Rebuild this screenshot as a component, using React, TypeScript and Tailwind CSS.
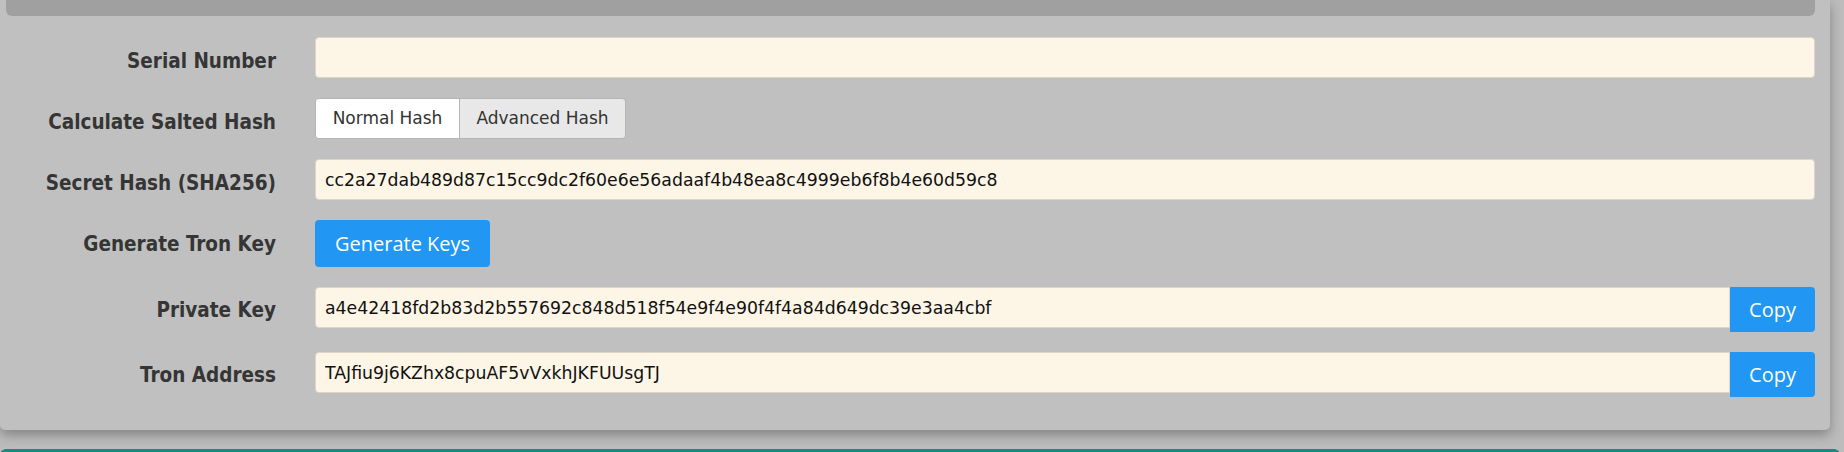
import { useState } from "react";

const LABEL =
  "w-[276px] shrink-0 text-right font-['DejaVu_Sans_Condensed','DejaVu_Sans',sans-serif] font-bold text-[20.5px] text-[#353535]";
const FIELD =
  "h-[41px] w-full rounded-[4px] border border-[#ddd5c6] bg-[#fdf5e6] pl-[9px] font-['DejaVu_Sans',sans-serif] text-[17.3px] text-[#111] outline-none";
const BLUE_BTN =
  "bg-[#2196f3] text-white font-['Open_Sans',sans-serif] text-[20px]";

const SECRET_HASH = "cc2a27dab489d87c15cc9dc2f60e6e56adaaf4b48ea8c4999eb6f8b4e60d59c8";
const PRIVATE_KEY = "a4e42418fd2b83d2b557692c848d518f54e9f4e90f4f4a84d649dc39e3aa4cbf";
const TRON_ADDRESS = "TAJfiu9j6KZhx8cpuAF5vVxkhJKFUUsgTJ";

function Row({ label, low, children }: { label: string; low?: boolean; children: React.ReactNode }) {
  return (
    <div className="flex items-center">
      <label className={`${LABEL} ${low ? "pt-[7px]" : "pt-[2px]"}`}>{label}</label>
      <div className="ml-[39px] flex flex-1">{children}</div>
    </div>
  );
}

function CopyField({ value }: { value: string }) {
  return (
    <div className="flex w-full items-start">
      <input readOnly value={value} className={`${FIELD} rounded-r-none`} />
      <button className={`${BLUE_BTN} h-[45px] w-[85px] shrink-0 rounded-r-[4px] text-[19px]`}>Copy</button>
    </div>
  );
}

export default function App() {
  const [mode, setMode] = useState<"normal" | "advanced">("normal");

  return (
    <div className="h-[452px] w-[1844px] overflow-hidden bg-[#bcbcbc]">
      <div className="relative z-10 w-[1830px] rounded-b-[5px] bg-[#c0c0c0] pb-[33px] pr-[15px] shadow-[0_5px_12px_rgba(0,0,0,0.3)]">
        {/* bottom of the card above */}
        <div className="ml-[6px] h-4 rounded-b-[6px] bg-[#a0a0a0]" />

        <div className="mt-[21px] flex flex-col gap-5">
          <Row label="Serial Number" low>
            <input readOnly value="" className={FIELD} />
          </Row>

          <Row label="Calculate Salted Hash" low>
            <div className="flex h-[41px] overflow-hidden rounded-[4px] border border-[#b5b5b5] font-['DejaVu_Sans',sans-serif] text-[17px] text-[#333]">
              <button
                onClick={() => setMode("normal")}
                className={`w-[143px] ${mode === "normal" ? "bg-white" : "bg-[#e8e8e8]"}`}
              >
                Normal Hash
              </button>
              <button
                onClick={() => setMode("advanced")}
                className={`w-[166px] border-l border-[#b5b5b5] ${mode === "advanced" ? "bg-white" : "bg-[#e8e8e8]"}`}
              >
                Advanced Hash
              </button>
            </div>
          </Row>

          <Row label="Secret Hash (SHA256)" low>
            <input readOnly value={SECRET_HASH} className={FIELD} />
          </Row>

          <Row label="Generate Tron Key">
            <button className={`${BLUE_BTN} h-[47px] rounded-[4px] px-5`}>Generate Keys</button>
          </Row>

          <Row label="Private Key">
            <CopyField value={PRIVATE_KEY} />
          </Row>

          <Row label="Tron Address">
            <CopyField value={TRON_ADDRESS} />
          </Row>
        </div>
      </div>

      {/* next card, only its top edge shows */}
      <div className="mt-[19px] h-10 w-[1840px] rounded-t-[6px] border-t-[3px] border-[#138c7e] bg-[#c0c0c0]" />
    </div>
  );
}
